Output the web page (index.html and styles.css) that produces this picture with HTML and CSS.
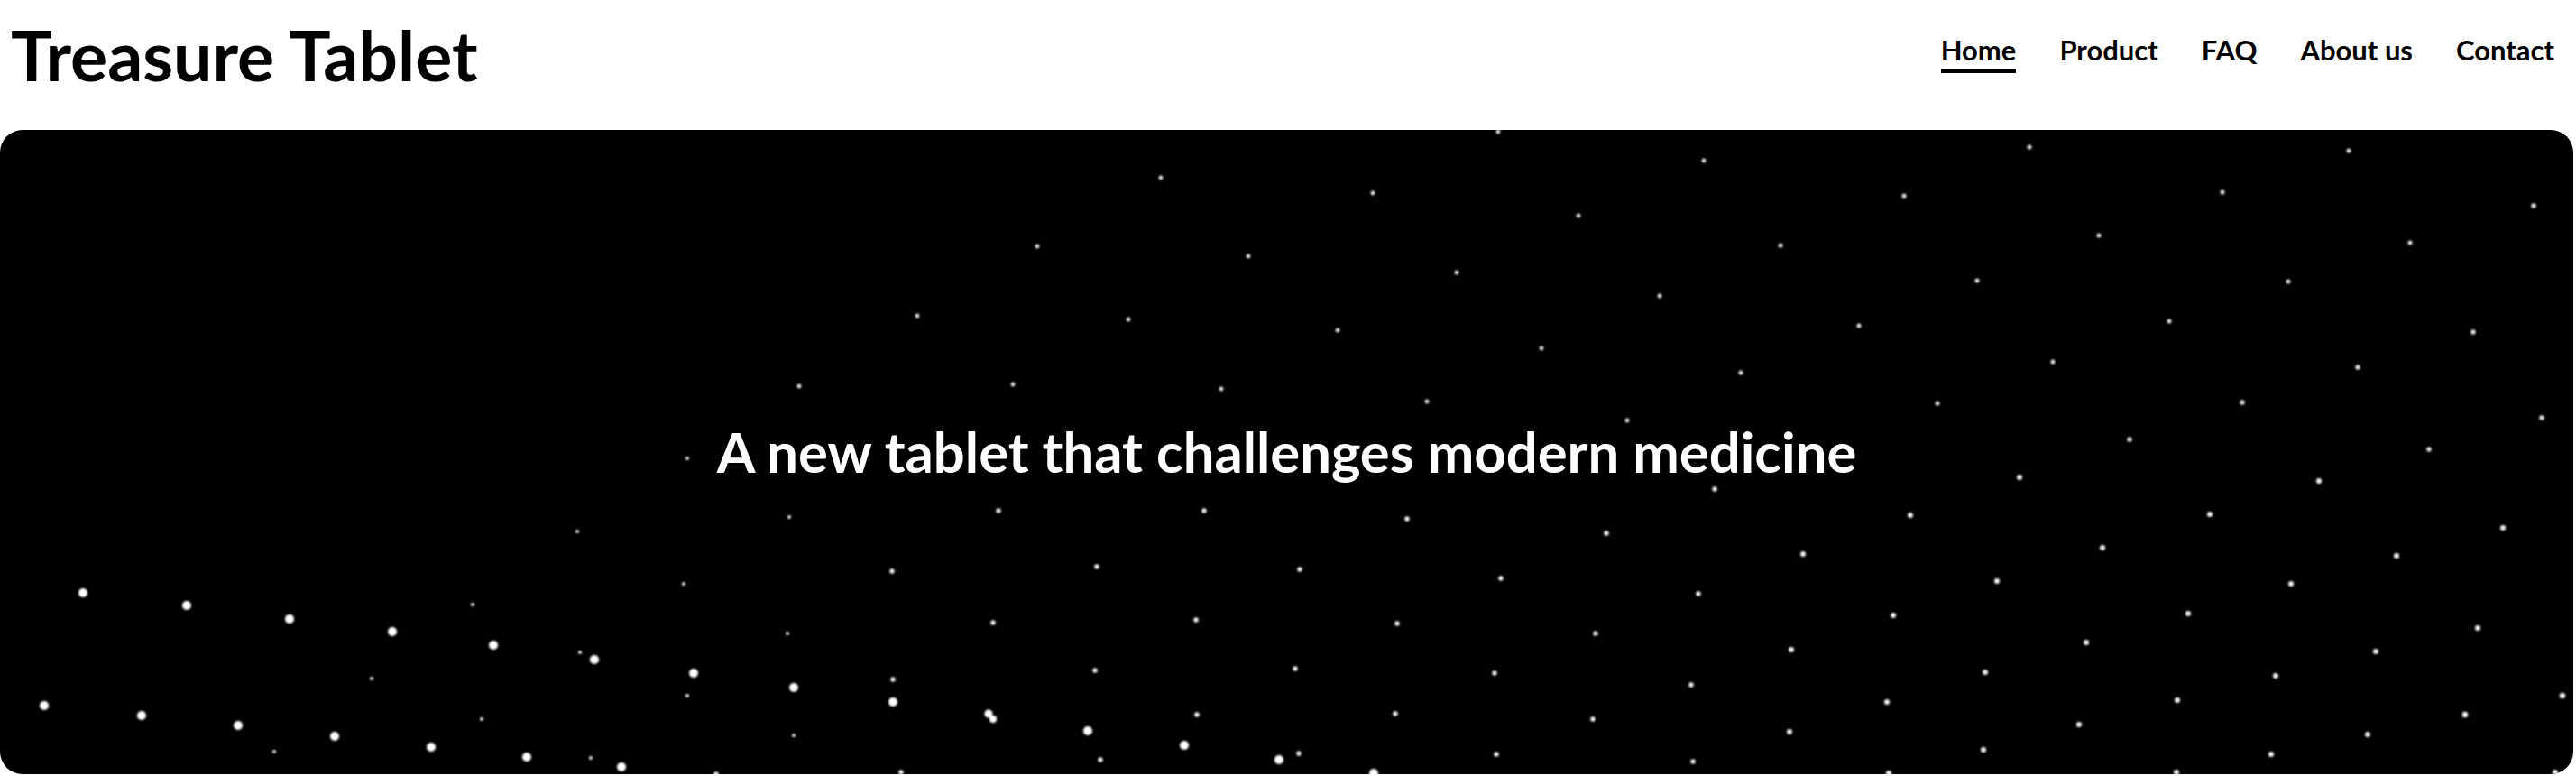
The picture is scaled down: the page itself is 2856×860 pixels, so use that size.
FILE: index.html
```html
<!DOCTYPE html>
<html lang="en">
<head>
<meta charset="utf-8">
<title>Treasure Tablet</title>
<link rel="stylesheet" href="styles.css">
</head>
<body>
<header class="site-header">
  <h1 class="brand">Treasure Tablet</h1>
  <nav class="nav">
    <a class="nav-link active" href="#">Home</a>
    <a class="nav-link" href="#">Product</a>
    <a class="nav-link" href="#">FAQ</a>
    <a class="nav-link" href="#">About us</a>
    <a class="nav-link" href="#">Contact</a>
  </nav>
</header>
<main class="hero">
  <svg class="stars" viewBox="0 0 2853 714" width="2853" height="714" aria-hidden="true">
    <defs>
      <filter id="glow" x="-50%" y="-50%" width="200%" height="200%">
        <feGaussianBlur stdDeviation="0.9"/>
      </filter>
    </defs>
    <g class="star-far" filter="url(#glow)">
      <circle cx="1661" cy="2" r="2.4"/>
      <circle cx="1889" cy="34" r="2.4"/>
      <circle cx="1287" cy="53" r="2.4"/>
      <circle cx="1522" cy="70" r="2.4"/>
      <circle cx="1750" cy="95" r="2.4"/>
      <circle cx="1150" cy="129" r="2.4"/>
      <circle cx="1384" cy="140" r="2.4"/>
      <circle cx="1615" cy="158" r="2.4"/>
      <circle cx="1840" cy="184" r="2.4"/>
      <circle cx="1017" cy="206" r="2.4"/>
      <circle cx="1251" cy="210" r="2.4"/>
      <circle cx="1483" cy="222" r="2.4"/>
      <circle cx="1709" cy="242" r="2.4"/>
      <circle cx="1123" cy="282" r="2.4"/>
      <circle cx="1354" cy="287" r="2.4"/>
      <circle cx="1582" cy="301" r="2.4"/>
      <circle cx="1804" cy="322" r="2.4"/>
      <circle cx="886" cy="284" r="2.4"/>
      <circle cx="2250" cy="19" r="2.5"/>
      <circle cx="2604" cy="23" r="2.5"/>
      <circle cx="2111" cy="73" r="2.5"/>
      <circle cx="2464" cy="69" r="2.5"/>
      <circle cx="2809" cy="84" r="2.7"/>
      <circle cx="1974" cy="128" r="2.5"/>
      <circle cx="2327" cy="117" r="2.5"/>
      <circle cx="2672" cy="125" r="2.5"/>
      <circle cx="2192" cy="167" r="2.5"/>
      <circle cx="2537" cy="168" r="2.5"/>
      <circle cx="2061" cy="217" r="2.5"/>
      <circle cx="2405" cy="212" r="2.5"/>
      <circle cx="2742" cy="224" r="2.7"/>
      <circle cx="1930" cy="269" r="2.5"/>
      <circle cx="2276" cy="257" r="2.5"/>
      <circle cx="2614" cy="263" r="2.7"/>
      <circle cx="2148" cy="303" r="2.5"/>
      <circle cx="2486" cy="302" r="2.7"/>
      <circle cx="2818" cy="319" r="2.7"/>
      <circle cx="2361" cy="343" r="2.7"/>
      <circle cx="2693" cy="354" r="2.7"/>
      <circle cx="762" cy="364" r="2.1"/>
      <circle cx="875" cy="429" r="2.1"/>
      <circle cx="640" cy="445" r="2.1"/>
      <circle cx="758" cy="503" r="2.1"/>
      <circle cx="524" cy="526" r="2.1"/>
      <circle cx="873" cy="558" r="2.1"/>
      <circle cx="643" cy="579" r="2.1"/>
      <circle cx="412" cy="608" r="2.1"/>
      <circle cx="762" cy="627" r="2.1"/>
      <circle cx="534" cy="653" r="2.1"/>
      <circle cx="880" cy="671" r="2.1"/>
      <circle cx="304" cy="689" r="2.1"/>
      <circle cx="655" cy="696" r="2.1"/>
    </g>
    <g class="star-mid" filter="url(#glow)">
      <circle cx="1901" cy="398" r="2.7"/>
      <circle cx="1107" cy="422" r="2.7"/>
      <circle cx="1335" cy="422" r="2.7"/>
      <circle cx="1560" cy="431" r="2.7"/>
      <circle cx="1781" cy="447" r="2.7"/>
      <circle cx="989" cy="489" r="2.7"/>
      <circle cx="1216" cy="484" r="2.7"/>
      <circle cx="1441" cy="487" r="2.7"/>
      <circle cx="1664" cy="497" r="2.7"/>
      <circle cx="1883" cy="514" r="2.7"/>
      <circle cx="1101" cy="546" r="2.7"/>
      <circle cx="1326" cy="543" r="2.7"/>
      <circle cx="1549" cy="547" r="2.7"/>
      <circle cx="1769" cy="558" r="2.7"/>
      <circle cx="990" cy="609" r="2.7"/>
      <circle cx="1214" cy="599" r="2.7"/>
      <circle cx="1436" cy="597" r="2.7"/>
      <circle cx="1657" cy="602" r="2.7"/>
      <circle cx="1875" cy="615" r="2.7"/>
      <circle cx="1327" cy="648" r="2.7"/>
      <circle cx="1547" cy="647" r="2.7"/>
      <circle cx="1766" cy="653" r="2.7"/>
      <circle cx="1220" cy="698" r="2.7"/>
      <circle cx="1440" cy="691" r="2.7"/>
      <circle cx="1659" cy="692" r="2.7"/>
      <circle cx="1877" cy="700" r="2.7"/>
      <circle cx="999" cy="712" r="2.7"/>
      <circle cx="794" cy="714" r="2.7"/>
      <circle cx="2239" cy="385" r="3"/>
      <circle cx="2571" cy="389" r="3"/>
      <circle cx="2118" cy="427" r="3"/>
      <circle cx="2450" cy="426" r="3"/>
      <circle cx="2775" cy="441" r="3"/>
      <circle cx="1999" cy="470" r="3"/>
      <circle cx="2331" cy="463" r="3"/>
      <circle cx="2657" cy="472" r="3"/>
      <circle cx="2214" cy="500" r="3"/>
      <circle cx="2540" cy="503" r="3"/>
      <circle cx="2099" cy="538" r="3"/>
      <circle cx="2426" cy="536" r="3"/>
      <circle cx="2747" cy="552" r="3"/>
      <circle cx="1986" cy="576" r="3"/>
      <circle cx="2313" cy="568" r="3"/>
      <circle cx="2634" cy="578" r="3"/>
      <circle cx="2201" cy="601" r="3"/>
      <circle cx="2523" cy="605" r="3"/>
      <circle cx="2841" cy="627" r="3.2"/>
      <circle cx="2092" cy="634" r="3"/>
      <circle cx="2414" cy="632" r="3"/>
      <circle cx="2733" cy="648" r="3.2"/>
      <circle cx="1984" cy="667" r="3"/>
      <circle cx="2305" cy="659" r="3"/>
      <circle cx="2625" cy="670" r="3"/>
      <circle cx="2199" cy="687" r="3"/>
      <circle cx="2518" cy="692" r="3"/>
      <circle cx="2094" cy="713" r="3"/>
      <circle cx="2413" cy="712" r="3"/>
      <circle cx="2833" cy="712" r="3"/>
    </g>
    <g class="star-near" filter="url(#glow)">
      <circle cx="92" cy="513" r="5"/>
      <circle cx="207" cy="527" r="5"/>
      <circle cx="321" cy="542" r="5"/>
      <circle cx="435" cy="556" r="5"/>
      <circle cx="547" cy="571" r="5"/>
      <circle cx="659" cy="587" r="5"/>
      <circle cx="769" cy="602" r="5"/>
      <circle cx="880" cy="618" r="5"/>
      <circle cx="990" cy="634" r="5"/>
      <circle cx="1096" cy="647" r="4.5"/>
      <circle cx="1101" cy="653" r="4"/>
      <circle cx="49" cy="638" r="5"/>
      <circle cx="157" cy="649" r="5"/>
      <circle cx="264" cy="660" r="5"/>
      <circle cx="371" cy="672" r="5"/>
      <circle cx="478" cy="684" r="5"/>
      <circle cx="584" cy="695" r="5"/>
      <circle cx="689" cy="706" r="5"/>
      <circle cx="1206" cy="666" r="5"/>
      <circle cx="1313" cy="682" r="5"/>
      <circle cx="1418" cy="698" r="5"/>
      <circle cx="1523" cy="713" r="5"/>
    </g>
  </svg>
  <h2 class="hero-title">A new tablet that challenges modern medicine</h2>
</main>
</body>
</html>
```

FILE: styles.css
```css
* {
  box-sizing: border-box;
}

html, body {
  margin: 0;
  padding: 0;
  background: #fff;
}

body {
  font-family: Lato, "Open Sans", "Liberation Sans", sans-serif;
  color: #000;
  overflow: hidden;
}

.site-header {
  display: flex;
  justify-content: space-between;
  align-items: flex-start;
  height: 144px;
  padding: 14px 24px 0 12px;
}

.brand {
  margin: 0;
  font-size: 77px;
  font-weight: 700;
  line-height: 1.2;
  letter-spacing: 0;
}

.nav {
  display: flex;
  gap: 48px;
  margin-top: 23px;
}

.nav-link {
  font-size: 31px;
  font-weight: 700;
  line-height: 1.2;
  color: #000;
  text-decoration: none;
  padding-bottom: 2px;
  border-bottom: 5px solid transparent;
}

.nav-link.active {
  border-bottom-color: #000;
}

.hero {
  position: relative;
  display: flex;
  align-items: center;
  justify-content: center;
  width: 2853px;
  height: 714px;
  background: #000;
  border-radius: 25px;
  overflow: hidden;
}

.stars {
  position: absolute;
  inset: 0;
  width: 100%;
  height: 100%;
}

.star-far {
  fill: #e8e8e8;
}

.star-mid {
  fill: #f4f4f4;
}

.star-near {
  fill: #ffffff;
}

.hero-title {
  position: relative;
  margin: 0;
  color: #fff;
  font-size: 61.6px;
  font-weight: 700;
  line-height: 1.2;
}
```
